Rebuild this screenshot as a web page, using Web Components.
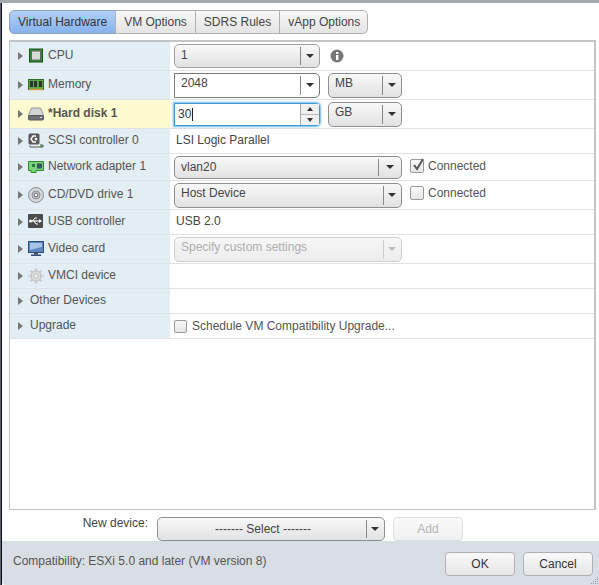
<!DOCTYPE html>
<html>
<head>
<meta charset="utf-8">
<title>Edit Settings</title>
<style>
	html, body { margin: 0; height: 100%; background: #5a6470; overflow: hidden; }
</style>
</head>
<body>

<vm-dialog>
	<vm-tabs slot="tabs">
		<vm-tab selected>Virtual Hardware</vm-tab>
		<vm-tab>VM Options</vm-tab>
		<vm-tab>SDRS Rules</vm-tab>
		<vm-tab>vApp Options</vm-tab>
	</vm-tabs>

	<vm-row h="29" icon="cpu" label="CPU">
		<vm-combo w="146" sep="19" tall>1</vm-combo>
		<svg width="14" height="14" viewBox="0 0 14 14" style="margin-left:10px"><circle cx="7" cy="7" r="6.5" fill="#777"/><rect x="6" y="6" width="2.4" height="5" fill="#fff"/><rect x="6" y="3" width="2.4" height="2" fill="#fff"/></svg>
	</vm-row>
	<vm-row h="29" icon="mem" label="Memory">
		<vm-combo w="146" sep="19" white top>2048</vm-combo>
		<vm-combo w="74" sep="19" top style="margin-left:8px">MB</vm-combo>
	</vm-row>
	<vm-row h="29" icon="disk" label="*Hard disk 1" active>
		<vm-spinner>30</vm-spinner>
		<vm-combo w="74" sep="19" top style="margin-left:8px">GB</vm-combo>
	</vm-row>
	<vm-row h="25" icon="scsi" label="SCSI controller 0"><vm-text>LSI Logic Parallel</vm-text></vm-row>
	<vm-row h="27" icon="net" label="Network adapter 1">
		<vm-combo w="228" sep="23" short>vlan20</vm-combo>
		<vm-check checked style="margin-left:8px;position:relative;top:-1px">Connected</vm-check>
	</vm-row>
	<vm-row h="29" icon="cd" label="CD/DVD drive 1">
		<vm-combo w="228" sep="18" top>Host Device</vm-combo>
		<vm-check style="margin-left:8px;position:relative;top:-2px">Connected</vm-check>
	</vm-row>
	<vm-row h="25" icon="usb" label="USB controller"><vm-text>USB 2.0</vm-text></vm-row>
	<vm-row h="29" icon="video" label="Video card">
		<vm-combo w="228" sep="18" top disabled>Specify custom settings</vm-combo>
	</vm-row>
	<vm-row h="25" icon="gear" label="VMCI device"></vm-row>
	<vm-row h="25" label="Other Devices"></vm-row>
	<vm-row h="25" label="Upgrade">
		<vm-check compact>Schedule VM Compatibility Upgrade...</vm-check>
	</vm-row>

	<vm-newdevice slot="device"></vm-newdevice>
	<vm-footer slot="footer"></vm-footer>
</vm-dialog>

<script>
// small helper, every element just renders a string into its shadow root
function shadow(el, html) {
	el.attachShadow({ mode: 'open' }).innerHTML = html;
}

const FONT = `font-family: "Liberation Sans", Arial, sans-serif; font-size: 12px;`;

class VmDialog extends HTMLElement {
	constructor() {
		super();
		shadow(this, `
		<style>
			:host { display: flex; flex-direction: column; height: 585px; margin-left: 1px; border-left: 1px solid #111; background: #fff; box-sizing: border-box; ${FONT} color: #555; }
			.top { height: 3px; background: #a5a9ac; flex: none; margin-left: -2px; }
			.tabs { padding: 7px 0 0 7px; flex: none; }
			.table { margin: 6px 3px 0 7px; height: 470px; box-sizing: border-box; border: 1px solid #c2c5c8; border-top-width: 2px; border-right-width: 2px; flex: none; background: #fff; }
			.footer { margin-top: auto; }
		</style>
		<div class="top"></div>
		<div class="tabs"><slot name="tabs"></slot></div>
		<div class="table"><slot></slot></div>
		<slot name="device"></slot>
		<div class="footer"><slot name="footer"></slot></div>`);
	}
}

class VmTabs extends HTMLElement {
	constructor() {
		super();
		shadow(this, `<style>:host { display: flex; height: 24px; width: fit-content; }</style><slot></slot>`);
	}
}

class VmTab extends HTMLElement {
	constructor() {
		super();
		shadow(this, `
		<style>
			:host { display: flex; align-items: center; padding: 0 8px; box-sizing: border-box; height: 24px; margin-left: -1px; border: 1px solid #adb1b5; background: linear-gradient(#f7f7f7, #e4e4e4); color: #444; white-space: nowrap; }
			:host(:first-child) { margin-left: 0; border-radius: 5px 0 0 5px; }
			:host(:last-child) { border-radius: 0 5px 5px 0; padding-right: 7px; }
			:host([selected]) { background: linear-gradient(#b3d0f5, #86b2ee); border-color: #8fa3bb; color: #333; }
		</style><slot></slot>`);
	}
}

const ICONS = {
	cpu: `<rect x="1.5" y="1" width="13" height="13" fill="#2f8a2f" stroke="#14551a"/><rect x="3.5" y="3" width="9" height="9" fill="#d8dcd8" stroke="#666"/>`,
	mem: `<rect x="0.5" y="2.5" width="15" height="10" fill="#5aa84a" stroke="#2e6d2a"/><rect x="2" y="4" width="3" height="6" fill="#333"/><rect x="6" y="4" width="3" height="6" fill="#333"/><rect x="11" y="4" width="3" height="6" fill="#333"/><path d="M1 12.5h14" stroke="#d8a040" stroke-width="1.5"/>`,
	disk: `<path d="M3.5 2h9L16 10H0z" fill="#d2d5d8" stroke="#888" stroke-width=".8"/><rect x=".5" y="9.5" width="15" height="4.5" rx="1" fill="#6d7175" stroke="#555"/><rect x="12" y="11" width="2" height="1" fill="#dde"/>`,
	scsi: `<rect x="0.5" y="0.5" width="11" height="11" rx="1.5" fill="#5a5a5a"/><path d="M8 3H5L3 6l2 3h3" fill="none" stroke="#fff" stroke-width="1.4"/><circle cx="8" cy="6" r="1.3" fill="#fff"/><path d="M2 12.5v1.5h13v-2h-3" fill="#eee" stroke="#555"/><rect x="12" y="12.5" width="2.5" height="1.5" fill="#3a9a3a"/>`,
	net: `<path d="M0.5 2.5h15v9H8v2H3v-2H0.5z" fill="#7ad276" stroke="#2c8c2c"/><rect x="9" y="4.5" width="5" height="5" fill="#356"/><rect x="4" y="5" width="3" height="3" fill="#2a7a3a"/>`,
	cd: `<circle cx="8" cy="8" r="7.5" fill="#d5d7da" stroke="#8d9094"/><circle cx="8" cy="8" r="4" fill="#bfc2c8" stroke="#8d9094"/><circle cx="8" cy="8" r="1.8" fill="#fff" stroke="#666"/>`,
	usb: `<rect x="0" y="0" width="15" height="14" rx="1" fill="#4c4c4c"/><path d="M2 7h11" stroke="#fff" stroke-width="1.2"/><path d="M4.5 7l2.5-3h2M6 7l2 3h2" fill="none" stroke="#fff"/><path d="M11 5l3 2-3 2z" fill="#fff"/><circle cx="2.5" cy="7" r="1.5" fill="#fff"/>`,
	video: `<rect x="0.5" y="0.5" width="15" height="11" fill="#5d86bd" stroke="#2f4d7a"/><path d="M2 2h12v4L2 9z" fill="#a9c3e6"/><rect x="6" y="12" width="4" height="1.5" fill="#444"/><rect x="3" y="13.5" width="10" height="1.5" fill="#2f4d7a"/>`,
	gear: `<g stroke="#cfd1d3" stroke-width="2.6"><path d="M8 .5v15M.5 8h15M2.7 2.7l10.6 10.6M13.3 2.7L2.7 13.3"/></g><circle cx="8" cy="8" r="5" fill="#dcdee0" stroke="#bdbfc1"/><circle cx="8" cy="8" r="2.2" fill="#f2f2f2" stroke="#b5b5b5"/>`
};

class VmRow extends HTMLElement {
	constructor() {
		super();
		const icon = this.getAttribute('icon');
		const h = this.getAttribute('h');
		shadow(this, `
		<style>
			:host { display: grid; grid-template-columns: 160px 1fr; height: ${h}px; box-sizing: border-box; border-bottom: 1px solid #e0e3e5; }
			.name { display: flex; align-items: center; background: #e2edf4; padding-left: 8px; white-space: nowrap; padding-bottom: 3px; }
			:host([active]) .name { background: #fdfbcf; font-weight: bold; }
			.tri { width: 0; height: 0; border-left: 5px solid #777; border-top: 4px solid transparent; border-bottom: 4px solid transparent; margin-right: ${icon ? 5 : 7}px; position: relative; top: 1px; }
			svg { margin-right: 4px; flex: none; position: relative; top: 1px; }
			.value { display: flex; align-items: center; padding-left: 4px; min-width: 0; }
		</style>
		<div class="name"><span class="tri"></span>${icon ? `<svg width="16" height="16" viewBox="0 0 16 16">${ICONS[icon]}</svg>` : ''}<span>${this.getAttribute('label')}</span></div>
		<div class="value"><slot></slot></div>`);
	}
}

class VmCombo extends HTMLElement {
	constructor() {
		super();
		const sep = this.getAttribute('sep') || 19;
		shadow(this, `
		<style>
			:host { display: flex; width: ${this.getAttribute('w')}px; height: 25px; box-sizing: border-box; border: 1px solid #8f8f8f; border-radius: 5px; background: linear-gradient(#f8f8f8, #e2e2e2); color: #444; flex: none; }
			:host([short]) { height: 23px; }
			:host([tall]) { height: 24px; border-color: #a0a0a0; }
			:host([white]) { background: #fff; border-color: #777; border-radius: 0 5px 5px 0; }
			:host([disabled]) { border-color: #cfcfcf; background: linear-gradient(#f6f6f6, #ededed); color: #aeaeae; }
			.text { flex: 1; padding-left: var(--combo-pad, 6px); display: flex; align-items: center; justify-content: var(--combo-align, flex-start); overflow: hidden; white-space: nowrap; }
			:host([top]) .text { padding-bottom: 5px; }
			:host([tall]) .text { padding-bottom: 3px; }
			.arrow { width: ${sep}px; flex: none; display: flex; align-items: center; justify-content: center; position: relative; }
			.arrow::before { content: ""; position: absolute; left: 0; top: 2px; bottom: 2px; width: 1px; background: #888; }
			:host([disabled]) .arrow::before { background: #ccc; }
			.arrow i { width: 0; height: 0; border-top: 4px solid #333; border-left: 4px solid transparent; border-right: 4px solid transparent; }
			:host([disabled]) .arrow i { border-top-color: #bbb; }
		</style>
		<div class="text"><slot></slot></div><div class="arrow"><i></i></div>`);
	}
}

class VmSpinner extends HTMLElement {
	constructor() {
		super();
		shadow(this, `
		<style>
			:host { display: flex; width: 146px; height: 23px; box-sizing: border-box; border: 1px solid #3f9bd8; box-shadow: 0 0 2px 1px #6db9e8; border-radius: 0 4px 4px 0; background: #fff; color: #333; flex: none; }
			.text { flex: 1; padding-left: 3px; display: flex; align-items: center; }
			.caret { width: 1px; height: 13px; background: #222; margin-left: 1px; }
			.btns { width: 18px; border-left: 1px solid #aaa; display: grid; grid-template-rows: 1fr 1fr; background: #f0f0f0; }
			.btns div { display: flex; align-items: center; justify-content: center; }
			.btns div + div { border-top: 1px solid #bbb; }
			.up { width: 0; height: 0; border-bottom: 4px solid #333; border-left: 3.5px solid transparent; border-right: 3.5px solid transparent; }
			.down { width: 0; height: 0; border-top: 4px solid #333; border-left: 3.5px solid transparent; border-right: 3.5px solid transparent; }
		</style>
		<div class="text"><slot></slot><span class="caret"></span></div>
		<div class="btns"><div><i class="up"></i></div><div><i class="down"></i></div></div>`);
	}
}

class VmText extends HTMLElement {
	constructor() {
		super();
		shadow(this, `<style>:host { display: block; padding: 0 0 3px 2px; color: #444; }</style><slot></slot>`);
	}
}

class VmCheck extends HTMLElement {
	constructor() {
		super();
		const tick = this.hasAttribute('checked')
			? `<svg width="14" height="14" viewBox="0 0 14 14" style="position:absolute;left:0;top:-2px"><path d="M3 7l3 4 6-10" fill="none" stroke="#555" stroke-width="2"/></svg>` : '';
		shadow(this, `
		<style>
			:host { display: flex; align-items: center; gap: 5px; color: #555; white-space: nowrap; }
			:host(:not([compact])) { gap: 4px; }
			.box { position: relative; width: 11px; height: 11px; border: 1px solid #9b9b9b; border-radius: 2px; background: linear-gradient(#f8f8f8, #e6e6e6); flex: none; }
			:host(:not([compact])) .box { width: 12px; height: 12px; }
		</style>
		<span class="box">${tick}</span><span><slot></slot></span>`);
	}
}

class VmButton extends HTMLElement {
	constructor() {
		super();
		shadow(this, `
		<style>
			:host { display: flex; align-items: center; justify-content: center; width: 70px; height: 24px; box-sizing: border-box; border: 1px solid #aeb0b2; border-radius: 4px; background: linear-gradient(#f9f9f9, #e6e6e6); color: #333; }
			:host([disabled]) { border-color: #dedede; background: linear-gradient(#f9f9f9, #f1f1f1); color: #b5b5b5; }
		</style><slot></slot>`);
	}
}

class VmNewdevice extends HTMLElement {
	constructor() {
		super();
		shadow(this, `
		<style>
			:host { display: flex; align-items: flex-start; height: 31px; padding-top: 7px; box-sizing: border-box; flex: none; }
			.label { width: 146px; text-align: right; color: #444; margin-right: 9px; position: relative; top: -1px; }
			vm-combo { --combo-align: center; --combo-pad: 2px; height: 24px; }
			vm-button { margin-left: 8px; }
		</style>
		<span class="label">New device:</span>
		<vm-combo w="228" sep="18">------- Select -------</vm-combo>
		<vm-button disabled>Add</vm-button>`);
	}
}

class VmFooter extends HTMLElement {
	constructor() {
		super();
		shadow(this, `
		<style>
			:host { display: flex; height: 44px; background: #d9dee4; align-items: center; padding: 0 6px 0 11px; box-sizing: border-box; position: relative; color: #555; border-bottom-left-radius: 4px; }
			.info { flex: 1; padding-bottom: 4px; }
			vm-button { margin-left: 8px; position: relative; top: 1px; }
			svg { position: absolute; right: 0; bottom: 0; }
		</style>
		<span class="info">Compatibility: ESXi 5.0 and later (VM version 8)</span>
		<vm-button>OK</vm-button><vm-button>Cancel</vm-button>
		<svg width="9" height="9" viewBox="0 0 9 9" fill="#9a9ea3"><rect x="7" y="1" width="1" height="1"/><rect x="5" y="3" width="1" height="1"/><rect x="7" y="3" width="1" height="1"/><rect x="3" y="5" width="1" height="1"/><rect x="5" y="5" width="1" height="1"/><rect x="7" y="5" width="1" height="1"/><rect x="1" y="7" width="1" height="1"/><rect x="3" y="7" width="1" height="1"/><rect x="5" y="7" width="1" height="1"/><rect x="7" y="7" width="1" height="1"/></svg>`);
	}
}

// children first so the parents upgrade with everything in place
customElements.define('vm-button', VmButton);
customElements.define('vm-combo', VmCombo);
customElements.define('vm-spinner', VmSpinner);
customElements.define('vm-text', VmText);
customElements.define('vm-check', VmCheck);
customElements.define('vm-tab', VmTab);
customElements.define('vm-tabs', VmTabs);
customElements.define('vm-row', VmRow);
customElements.define('vm-newdevice', VmNewdevice);
customElements.define('vm-footer', VmFooter);
customElements.define('vm-dialog', VmDialog);
</script>
</body>
</html>
